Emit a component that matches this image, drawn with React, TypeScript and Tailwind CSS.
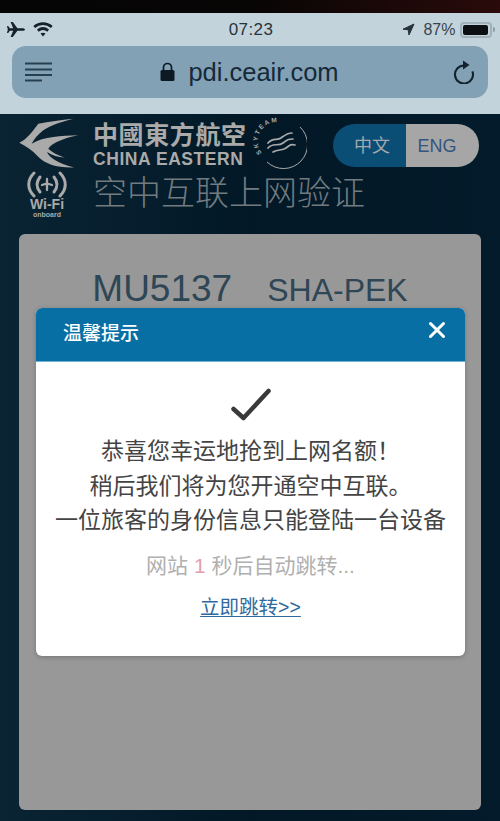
import { X } from 'lucide-react';

const cjk = { fontFamily: '"Liberation Sans", "Noto Sans CJK SC", sans-serif' };

function PlaneIcon() {
  return (
    <svg width="19" height="17" viewBox="0 0 19 17" fill="#15212b">
      <path d="M0 5h1.200l1.600 2.200h3.400L3.600 1h2.200l4.600 6.200h5c1.400 0 2.600.6 2.600 1.300s-1.200 1.300-2.600 1.300h-5L5.800 16H3.600l2.600-6.200H2.800L1.200 12H0l.8-3.500z" />
    </svg>
  );
}

function WifiIcon() {
  return (
    <svg width="20" height="15" viewBox="0 0 20 15" fill="none" stroke="#15212b" strokeWidth="2.700">
      <path d="M1.200 5c5.200-4.500 12.400-4.500 17.600 0" />
      <path d="M4.800 8.600c3.200-2.600 7.200-2.600 10.400 0" />
      <path d="M7.500 11.600 10 14.500l2.500-2.900c-1.500-1-3.500-1-5 0z" fill="#15212b" stroke="none" />
    </svg>
  );
}

function LocationIcon() {
  return (
    <svg width="13" height="13" viewBox="0 0 13 13" fill="#27323b" stroke="#27323b" strokeWidth="1" strokeLinejoin="round">
      <path d="M12 1 1 6.200l5.200.6.800 5.200z" />
    </svg>
  );
}

function Battery() {
  return (
    <div className="ml-[5px] flex items-center">
      <div className="flex h-[16px] w-[32px] items-center rounded-[4px] border-2 border-[#a2b0b8] p-[1px]">
        <div className="h-full w-[25px] rounded-[2px] bg-[#0b0f12]" />
      </div>
      <div className="ml-[1px] h-[5px] w-[1.500px] rounded-r-sm bg-[#8f9ca5]" />
    </div>
  );
}

function MenuIcon() {
  return (
    <svg width="28" height="20" viewBox="0 0 28 20" stroke="#27404f" strokeWidth="2">
      <path d="M0 1.500h27M0 7.500h27M0 13h27M0 18.500h17" />
    </svg>
  );
}

function LockIcon() {
  return (
    <svg width="15" height="20" viewBox="0 0 15 20">
      <path d="M3.500 9V5.500a4 4 0 0 1 8 0V9" fill="none" stroke="#0d1a24" strokeWidth="1.700" />
      <rect x="0.500" y="8" width="14" height="11" rx="1.500" fill="#0d1a24" />
    </svg>
  );
}

function ReloadIcon() {
  return (
    <svg width="21" height="24" viewBox="0 0 21 24" fill="none">
      <path d="M11 5.500a9 9 0 1 0 8.400 5.800" stroke="#12232f" strokeWidth="2.100" />
      <path d="M10 0.500 16.500 5 10 9.500z" fill="#12232f" />
    </svg>
  );
}

function ChinaEasternLogo() {
  return (
    <svg width="62" height="50" viewBox="0 0 62 50" fill="#a9aaa9" className="mt-[-3px] shrink-0">
      <path d="M0.300 24.700C8 21 13 14 19.300 5.700 30 3.500 42 2 54.300 0.700 42 4 32 7 24.300 12.300 19 16.500 15 21 12.700 25.700 19 22 26 20 34.300 19 42 18 51 17.500 59.300 17.300 51 19 44 21 37.700 24 34 26 31 28 29.300 30.700 33 34 39 37.500 46 39.500 39 39.500 33 37 28 34 30 39 38 45 55 49.500 38 50 26 46 19 38.500 13 32 7 28 0.300 24.700z" />
    </svg>
  );
}

function WifiOnboardLogo() {
  return (
    <div className="flex w-[46px] flex-col items-center text-[#a9aaa9]">
      <svg width="44" height="27" viewBox="0 0 44 27" fill="none" stroke="currentColor" strokeWidth="3" strokeLinecap="round">
        <path d="M9 2C2 9 2 18 9 25" />
        <path d="M15 6c-4 5-4 10 0 15" />
        <path d="M35 2c7 7 7 16 0 23" />
        <path d="M29 6c4 5 4 10 0 15" />
        <path d="M22 8v11M17 14l5-1.500 5 1.500" strokeWidth="2.300" />
      </svg>
      <span className="text-[14px] leading-[13px] font-bold" style={cjk}>Wi-Fi</span>
      <span className="text-[7px] leading-[7px] font-bold" style={cjk}>onboard</span>
    </div>
  );
}

function SkyTeamLogo() {
  return (
    <svg width="54" height="54" viewBox="0 0 54 54" fill="none" stroke="#a9aaa9">
      <path d="M47 11A24 24 0 0 1 14 46" strokeWidth="1" />
      <path id="skyteam-label" d="M9 37A19 19 0 1 1 41 17" stroke="none" />
      <text fontSize="6.500" fill="#a9aaa9" stroke="none" fontFamily="Liberation Sans" fontWeight="700" letterSpacing="1.800">
        <textPath href="#skyteam-label">SKYTEAM</textPath>
      </text>
      <path d="M15 27c5-6 9-2 13-5s6-5 11-5M15 32c5-6 10-1 15-5s6-4 10-4M20 36c5-3 9-1 13-4s5-4 9-3" strokeWidth="1.700" strokeLinecap="round" />
    </svg>
  );
}

function BigCheck() {
  return (
    <svg width="48" height="52" viewBox="0 0 48 52" fill="none" stroke="#3a3a3a" strokeWidth="4.500" strokeLinecap="round" strokeLinejoin="round">
      <path d="M6.500 27 16.500 36 41.500 9" />
    </svg>
  );
}

export default function App() {
  return (
    <div className="flex h-[821px] w-[500px] flex-col overflow-hidden bg-gradient-to-r from-[#0b2433] via-[#021827] to-[#041b2b]" style={cjk}>
      <div className="h-[13px] shrink-0 bg-gradient-to-r from-[#050505] via-[#080505] to-[#2a0a0a]" />

      {/* browser chrome */}
      <div className="h-[101px] shrink-0 bg-[#c3d3dc]">
        <div className="flex h-[33px] items-center justify-between pr-[5px] pl-[7px]">
          <div className="flex w-[150px] items-center gap-[7px]">
            <PlaneIcon />
            <WifiIcon />
          </div>
          <span className="text-[17px] font-medium tracking-[0.4px] text-[#27323b]">07:23</span>
          <div className="flex w-[150px] items-center justify-end">
            <LocationIcon />
            <span className="ml-[8px] text-[16px] text-[#37444e]">87%</span>
            <Battery />
          </div>
        </div>
        <div className="mx-[12px] flex h-[52px] items-center justify-between rounded-[14px] bg-[#82a1b5] pr-[14px] pl-[13px]">
          <MenuIcon />
          <div className="flex items-center gap-[13px] pr-[7px]">
            <LockIcon />
            <span className="text-[25.500px] leading-[30px] text-[#15293a]">pdi.ceair.com</span>
          </div>
          <ReloadIcon />
        </div>
      </div>

      {/* page header */}
      <div className="flex h-[120px] shrink-0 pt-[7px] pl-[19px]">
        <div className="flex w-[74px] flex-col">
          <ChinaEasternLogo />
          <div className="mt-[3px] ml-[5px]">
            <WifiOnboardLogo />
          </div>
        </div>
        <div className="flex flex-col">
          <div className="flex items-start">
            <div className="flex flex-col pt-[1px]">
              <span className="text-[25px] leading-[27px] font-semibold tracking-[0.6px] text-[#a9aaa9]">中國東方航空</span>
              <span className="text-[17.500px] leading-[21px] font-bold tracking-[0.55px] text-[#a9aaa9]">CHINA EASTERN</span>
            </div>
            <div className="mt-[-5px] ml-[6px]">
              <SkyTeamLogo />
            </div>
            <div className="mt-[3px] ml-[26px] flex h-[43px] w-[146px] overflow-hidden rounded-full text-[18px]">
              <div className="flex w-[73px] items-center justify-center bg-[#0a4e76] pt-[1px] pl-[6px] text-[#a3a9ad]">中文</div>
              <div className="flex w-[73px] items-center justify-center bg-[#a6a6a6] pt-[1px] pr-[10px] text-[#33557f]">ENG</div>
            </div>
          </div>
          <span className="mt-[3px] text-[34px] leading-[40px] font-light text-[#727b80]">空中互联上网验证</span>
        </div>
      </div>

      {/* flight card with overlay modal */}
      <div className="relative mx-[19px] h-[576px] shrink-0 rounded-[6px] bg-[#989898] pt-[33px] text-center text-[#2e4655]">
        <div className="flex items-baseline justify-center gap-[35px]">
          <span className="text-[37px] leading-[44px]">MU5137</span>
          <span className="text-[32px] leading-[44px]">SHA-PEK</span>
        </div>

        <div className="absolute top-[74px] left-[17px] w-[429px] overflow-hidden rounded-[6px] bg-white shadow-[0_1px_4px_rgba(70,70,70,0.45)]">
          <div className="flex h-[54px] items-center justify-between border-b border-[#6fb4d6] bg-[#086fa4] pr-[15px] pl-[27px] text-white">
            <span className="text-[19px] font-medium">温馨提示</span>
            <X size={26} strokeWidth={2.8} className="mb-[10px]" />
          </div>
          <div className="flex h-[294px] flex-col items-center pt-[20px]">
            <BigCheck />
            <div className="text-[23px] leading-[34.500px] text-[#444]">
              <p>恭喜您幸运地抢到上网名额！</p>
              <p>稍后我们将为您开通空中互联。</p>
              <p>一位旅客的身份信息只能登陆一台设备</p>
            </div>
            <p className="mt-[14px] text-[21px] leading-[28px] text-[#b0b0b0]">
              网站 <span className="font-medium text-[#e2a0ae]">1</span> 秒后自动跳转...
            </p>
            <a className="mt-[14px] text-[19.500px] leading-[26px] text-[#2e6a9e] underline underline-offset-2">立即跳转&gt;&gt;</a>
          </div>
        </div>
      </div>
    </div>
  );
}
